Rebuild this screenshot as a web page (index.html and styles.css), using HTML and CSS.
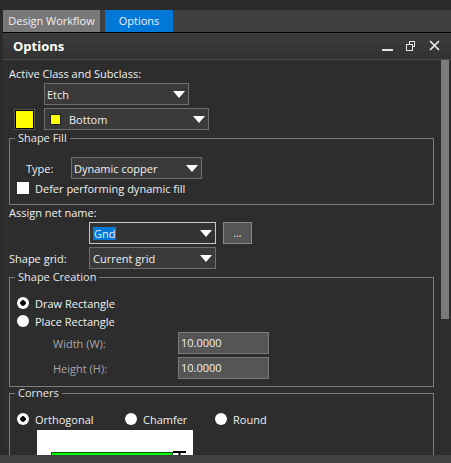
FILE: index.html
```html
<!DOCTYPE html>
<html lang="en">
<head>
    <meta charset="UTF-8">
    <title>Options</title>
    <link rel="stylesheet" href="styles.css">
</head>
<body>

<div class="top-strip"></div>

<div class="tab-bar">
    <div class="tab tab-workflow">Design Workflow</div>
    <div class="tab tab-active">Options</div>
</div>

<div class="title-bar">
    <span class="title">Options</span>
    <svg class="win-controls" width="62" height="26" viewBox="0 0 62 26">
        <rect x="2" y="16" width="11" height="2" fill="#e6e6e6"/>
        <rect x="29.5" y="8.5" width="5" height="5" fill="none" stroke="#e6e6e6"/>
        <rect x="26.5" y="11.5" width="6" height="6" fill="#363636" stroke="#e6e6e6"/>
        <path d="M50 8 L59 17 M59 8 L50 17" stroke="#f0f0f0" stroke-width="1.6"/>
    </svg>
</div>

<div class="main">
    <div class="content">
        <div class="label-row top-label">Active Class and Subclass:</div>

        <div class="select select-etch">
            <span>Etch</span>
            <span class="arrow"></span>
        </div>

        <div class="subclass-row">
            <div class="swatch"></div>
            <div class="select select-bottom">
                <span class="mini-swatch"></span>
                <span>Bottom</span>
                <span class="arrow"></span>
            </div>
        </div>

        <fieldset class="group group-fill">
            <legend>Shape Fill</legend>
            <div class="type-row">
                <span class="type-label">Type:</span>
                <div class="select select-type">
                    <span>Dynamic copper</span>
                    <span class="arrow"></span>
                </div>
            </div>
            <div class="check-row">
                <span class="checkbox"></span>
                <span>Defer performing dynamic fill</span>
            </div>
        </fieldset>

        <div class="label-row">Assign net name:</div>
        <div class="net-row">
            <div class="select select-net focused">
                <span class="selected-text">Gnd</span>
                <span class="arrow"></span>
            </div>
            <div class="browse-btn">...</div>
        </div>

        <div class="grid-row">
            <span class="grid-label">Shape grid:</span>
            <div class="select select-net">
                <span>Current grid</span>
                <span class="arrow"></span>
            </div>
        </div>

        <fieldset class="group group-creation">
            <legend>Shape Creation</legend>
            <div class="radio-row first">
                <span class="radio checked"></span>
                <span>Draw Rectangle</span>
            </div>
            <div class="radio-row second">
                <span class="radio"></span>
                <span>Place Rectangle</span>
            </div>
            <div class="size-row width-row">
                <span class="size-label">Width (W):</span>
                <div class="num-input">10.0000</div>
            </div>
            <div class="size-row">
                <span class="size-label">Height (H):</span>
                <div class="num-input">10.0000</div>
            </div>
        </fieldset>

        <fieldset class="group group-corners">
            <legend>Corners</legend>
            <div class="corner-options">
                <div class="radio-item item-ortho">
                    <span class="radio checked"></span>
                    <span>Orthogonal</span>
                </div>
                <div class="radio-item item-chamfer">
                    <span class="radio"></span>
                    <span>Chamfer</span>
                </div>
                <div class="radio-item">
                    <span class="radio"></span>
                    <span>Round</span>
                </div>
            </div>
            <div class="preview">
                <svg width="156" height="40" viewBox="0 0 156 40">
                    <rect x="14.5" y="22.5" width="121" height="14" fill="#00ff00" stroke="#0a5a0a"/>
                    <path d="M136 22 H149 M142.5 22 V38 M136 26 H149" stroke="#000" stroke-width="2"/>
                </svg>
            </div>
        </fieldset>
    </div>
    <div class="scrollbar"><div class="thumb"></div></div>
</div>

<div class="bottom-strip"></div>

</body>
</html>
```

FILE: styles.css
```css
body {
    margin: 0;
    width: 451px;
    height: 463px;
    overflow: hidden;
    background-color: #2b2b2b;
    font-family: 'Open Sans', 'Noto Sans', sans-serif;
    font-size: 11px;
    color: #f0f0f0;
}

.top-strip {
    height: 10px;
}

/* tabs */
.tab-bar {
    margin-left: 3px;
    height: 22px;
    background-color: #404040;
    border-bottom: 1px solid #000;
    display: flex;
    gap: 5px;
}

.tab {
    line-height: 22px;
    font-size: 11px;
    text-align: center;
}

.tab-workflow {
    width: 97px;
    background-color: #787878;
}

.tab-active {
    width: 68px;
    background-color: #0078d7;
}

/* panel title */
.title-bar {
    margin-left: 3px;
    height: 26px;
    background: linear-gradient(#3c3c3c, #323232);
    border-bottom: 1px solid #4a4a4a;
    display: flex;
    align-items: center;
}

.title {
    margin-left: 10px;
    font-size: 13px;
    font-weight: bold;
    color: #fff;
}

.win-controls {
    margin-left: auto;
    margin-right: 9px;
}

/* body */
.main {
    display: flex;
    height: 395px;
    margin-left: 3px;
    background-color: #2d2d2d;
}

.content {
    width: 438px;
    box-sizing: border-box;
    padding-left: 6px;
    overflow: hidden;
}

.scrollbar {
    width: 8px;
}

.thumb {
    height: 259px;
    background-color: #7a7a7a;
}

.bottom-strip {
    height: 8px;
    background-color: #414141;
}

.label-row {
    height: 16px;
    line-height: 16px;
}

.top-label {
    margin-top: 6px;
}

/* dropdowns */
.select {
    height: 22px;
    box-sizing: border-box;
    border: 1px solid #6e6e6e;
    background-color: #3a3a3a;
    display: flex;
    align-items: center;
    padding-left: 2px;
}

.select .arrow {
    margin-left: auto;
    margin-right: 3px;
    width: 0;
    height: 0;
    border-left: 6px solid transparent;
    border-right: 6px solid transparent;
    border-top: 7px solid #fff;
}

.select-etch {
    width: 145px;
    margin-left: 35px;
    margin-top: 1px;
}

.subclass-row {
    display: flex;
    align-items: center;
    margin-top: 3px;
}

.swatch {
    width: 19px;
    height: 19px;
    box-sizing: border-box;
    margin-left: 6px;
    border: 1px solid #000;
    background-color: #ffff00;
    outline: 1px solid #555;
}

.select-bottom {
    width: 165px;
    margin-left: 10px;
    padding-left: 5px;
}

.mini-swatch {
    width: 11px;
    height: 11px;
    box-sizing: border-box;
    border: 1px solid #222;
    background-color: #ffff00;
    margin-right: 8px;
}

/* group boxes */
.group {
    width: 425px;
    box-sizing: border-box;
    margin: 0;
    padding: 0;
    border: 1px solid #7c7c7c;
}

.group legend {
    margin-left: 5px;
    padding: 0 3px;
    line-height: 12px;
    color: #e8e8e8;
}

.group-fill {
    margin-top: 2px;
    padding-bottom: 9px;
}

.type-row {
    display: flex;
    align-items: center;
    margin-top: 13px;
}

.type-label {
    width: 45px;
    margin-left: 16px;
}

.select-type {
    width: 131px;
}

.check-row {
    display: flex;
    align-items: center;
    height: 14px;
    margin-top: 2px;
}

.checkbox {
    width: 12px;
    height: 12px;
    margin-left: 7px;
    margin-right: 6px;
    background-color: #fff;
}

.net-row {
    display: flex;
    margin-top: 1px;
    margin-left: 80px;
}

.select-net {
    width: 127px;
    padding-left: 3px;
}

.select-net.focused {
    border-color: #c8c8c8;
    background-color: #333;
}

.selected-text {
    background-color: #0078d7;
    padding: 0 1px;
    line-height: 13px;
}

.browse-btn {
    width: 29px;
    height: 22px;
    box-sizing: border-box;
    margin-left: 7px;
    border: 1px solid #888;
    background-color: #555;
    text-align: center;
    line-height: 20px;
    font-size: 10px;
}

.grid-row {
    display: flex;
    align-items: center;
    margin-top: 3px;
}

.grid-label {
    width: 80px;
}

.group-creation {
    margin-top: 2px;
    padding-bottom: 7px;
}

.radio-row {
    display: flex;
    align-items: center;
    height: 14px;
    padding-left: 7px;
}

.radio-row.first {
    margin-top: 13px;
}

.radio-row.second {
    margin-top: 4px;
}

.radio {
    width: 12px;
    height: 12px;
    border-radius: 50%;
    background-color: #fff;
    margin-right: 6px;
    flex-shrink: 0;
}

.radio.checked {
    background: radial-gradient(circle, #000 0 2.5px, #fff 3px);
}

.size-row {
    display: flex;
    align-items: center;
    margin-top: 3px;
}

.size-row.width-row {
    margin-top: 4px;
}

.size-label {
    width: 125px;
    margin-left: 43px;
    color: #a8a8a8;
}

.num-input {
    width: 91px;
    height: 22px;
    box-sizing: border-box;
    border: 1px solid #7a7a7a;
    background-color: #555;
    padding-left: 2px;
    line-height: 20px;
}

.corner-options {
    display: flex;
    height: 14px;
    margin-top: 13px;
    padding-left: 7px;
}

.radio-item {
    display: flex;
    align-items: center;
}

.item-ortho {
    width: 108px;
}

.item-chamfer {
    width: 90px;
}

.preview {
    width: 156px;
    height: 40px;
    margin-top: 4px;
    margin-left: 27px;
    background-color: #fff;
}

.preview svg {
    display: block;
}
```
